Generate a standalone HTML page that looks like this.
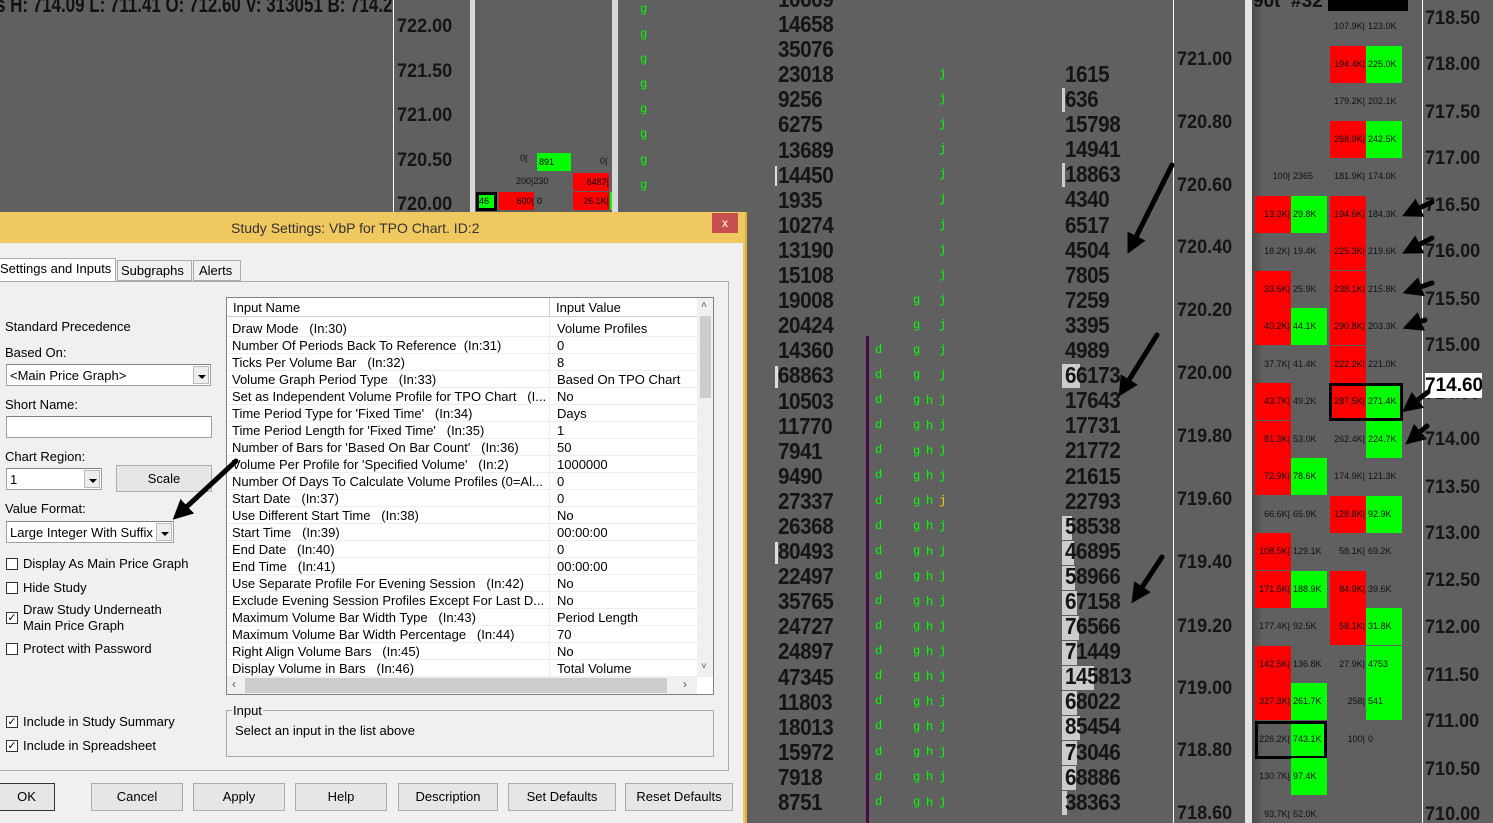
<!DOCTYPE html>
<html style="overflow:hidden;height:823px"><head><meta charset="utf-8"><style>
*{margin:0;padding:0;box-sizing:border-box}
html,body{overflow:hidden}
body{width:1493px;height:823px;overflow:hidden;background:#606060;position:relative;font-family:"Liberation Sans",sans-serif}
.a{position:absolute}
.big{position:absolute;font-size:23px;font-weight:bold;color:#151515;letter-spacing:-0.5px;line-height:25.1px;white-space:pre;transform:scaleX(0.9);transform-origin:0 0}
.px{position:absolute;font-size:19px;font-weight:bold;color:#151515;white-space:pre;transform:scaleX(0.95);transform-origin:0 0}
.lt{position:absolute;font-size:12px;color:#0f0;line-height:25.1px;white-space:pre;font-family:"Liberation Mono",monospace}
.c{position:absolute;width:36px;height:37px;line-height:37px;font-size:9px;color:#111;white-space:nowrap}
.L{text-align:right;padding-right:1px}.R{text-align:left;padding-left:2px}
.r{background:#f00}.g{background:#0f0}
.dlg{position:absolute;left:0;top:212px;width:747px;height:611px;background:#f0c860;border-right:2px solid #e0b040}
.dl{font-size:13px;color:#000;position:absolute;white-space:nowrap}
.box{position:absolute;background:#fff;border:1px solid #a0a0a0;border-top-color:#828282}
.dd{position:absolute;right:1px;top:1px;bottom:1px;width:16px;background:#eee;border:1px solid #bbb}
.dd:after{content:"";position:absolute;left:4px;top:8px;border:4px solid transparent;border-top:4px solid #000}
.cb{position:absolute;width:12px;height:12px;border:1px solid #333;background:#fff;font-size:11px;line-height:10px;text-align:center}
.btn{position:absolute;top:783px;height:28px;background:#e6e6e6;border:1px solid #adadad;font-size:13px;text-align:center;line-height:26px}
.tr{position:absolute;left:0;width:470px;height:17px;border-bottom:1px solid #eee;font-size:13px;line-height:17px;white-space:nowrap}
.tr span{position:absolute;left:5px}.tr b{font-weight:normal;position:absolute;left:330px}
</style></head><body>

<div class="a" style="left:0;top:0;width:393px;height:40px;overflow:hidden">
<div class="a" style="left:-4px;top:-8px;font-size:22px;font-weight:bold;color:#111;white-space:nowrap;transform:scaleX(0.77);transform-origin:0 0">s H: 714.09 L: 711.41 O: 712.60 V: 313051 B: 714.2</div>
</div>
<div class="a" style="left:393px;top:0;width:1px;height:212px;background:#fff"></div>
<div class="px" style="left:397px;top:16px">722.00</div>
<div class="px" style="left:397px;top:61px">721.50</div>
<div class="px" style="left:397px;top:105px">721.00</div>
<div class="px" style="left:397px;top:150px">720.50</div>
<div class="px" style="left:397px;top:194px">720.00</div>
<div class="a" style="left:470px;top:0;width:5px;height:212px;background:#d8d8d8"></div>
<div class="a" style="left:612px;top:0;width:6px;height:212px;background:#d8d8d8"></div>
<div class="a" style="left:520px;top:153px;font-size:9px;color:#111;">0|</div>
<div class="a g" style="left:537px;top:153px;width:34px;height:18px;font-size:9px;line-height:18px;padding-left:2px">891</div>
<div class="a" style="left:600px;top:156px;font-size:9px;color:#111">0|</div>
<div class="a" style="left:516px;top:176px;font-size:9px;color:#111">200|230</div>
<div class="a r" style="left:573px;top:173px;width:36px;height:18px;font-size:9px;line-height:18px;text-align:right">6487|</div>
<div class="a g" style="left:476px;top:192px;width:21px;height:19px;font-size:9px;line-height:13px;border:3px solid #000">46</div>
<div class="a r" style="left:499px;top:192px;width:35px;height:18px;font-size:9px;line-height:18px;text-align:right">600|</div>
<div class="a" style="left:537px;top:196px;font-size:9px">0</div>
<div class="a r" style="left:573px;top:192px;width:36px;height:18px;font-size:9px;line-height:18px;text-align:right">26.1K|</div>
<div class="a g" style="left:610px;top:192px;width:2px;height:18px"></div>
<div class="lt" style="left:640px;top:-3px">g
g
g
g
g
g
g
g</div>

<div class="big" style="left:778px;top:-13px">10669
14658
35076
23018
9256
6275
13689
14450
1935
10274
13190
15108
19008
20424
14360
68863
10503
11770
7941
9490
27337
26368
80493
22497
35765
24727
24897
47345
11803
18013
15972
7918
8751</div>
<div class="a" style="left:775px;top:166px;width:2px;height:20px;background:#ddd"></div>
<div class="a" style="left:775px;top:366px;width:3px;height:22px;background:#ddd"></div>
<div class="a" style="left:775px;top:542px;width:3px;height:22px;background:#ddd"></div>
<div class="a" style="left:866px;top:336px;width:3px;height:487px;background:#4a0a4a"></div>
<div class="lt" style="left:875px;top:338px">d
d
d
d
d
d
d
d
d
d
d
d
d
d
d
d
d
d
d</div>
<div class="lt" style="left:913px;top:288px">g
g
g
g
g
g
g
g
g
g
g
g
g
g
g
g
g
g
g
g
g</div>
<div class="lt" style="left:926px;top:389px">h
h
h
h
h
h
h
h
h
h
h
h
h
h
h
h
h</div>
<div class="lt" style="left:939px;top:62px">j
j
j
j
j
j
j
j
j
j
j
j
j
j
j
j
j
<span style="color:#fc0">j</span>
j
j
j
j
j
j
j
j
j
j
j
j</div>
<div class="a" style="left:1062px;top:88px;width:3px;height:24px;background:#ccc"></div>
<div class="a" style="left:1062px;top:163px;width:3px;height:24px;background:#ccc"></div>
<div class="a" style="left:1062px;top:364px;width:18px;height:24px;background:#ccc"></div>
<div class="a" style="left:1062px;top:516px;width:10px;height:24px;background:#ccc"></div>
<div class="a" style="left:1062px;top:541px;width:12px;height:24px;background:#ccc"></div>
<div class="a" style="left:1062px;top:566px;width:13px;height:24px;background:#ccc"></div>
<div class="a" style="left:1062px;top:591px;width:15px;height:24px;background:#ccc"></div>
<div class="a" style="left:1062px;top:616px;width:17px;height:24px;background:#ccc"></div>
<div class="a" style="left:1062px;top:641px;width:15px;height:24px;background:#ccc"></div>
<div class="a" style="left:1062px;top:666px;width:32px;height:24px;background:#ccc"></div>
<div class="a" style="left:1062px;top:691px;width:15px;height:24px;background:#ccc"></div>
<div class="a" style="left:1062px;top:716px;width:18px;height:24px;background:#ccc"></div>
<div class="a" style="left:1062px;top:741px;width:15px;height:24px;background:#ccc"></div>
<div class="a" style="left:1062px;top:766px;width:14px;height:24px;background:#ccc"></div>
<div class="a" style="left:1062px;top:791px;width:5px;height:24px;background:#ccc"></div>
<div class="big" style="left:1065px;top:62px">1615
636
15798
14941
18863
4340
6517
4504
7805
7259
3395
4989
66173
17643
17731
21772
21615
22793
58538
46895
58966
67158
76566
71449
145813
68022
85454
73046
68886
38363</div>
<div class="a" style="left:1173px;top:0;width:1px;height:823px;background:#fff"></div>
<div class="px" style="left:1177px;top:49px">721.00</div>
<div class="px" style="left:1177px;top:112px">720.80</div>
<div class="px" style="left:1177px;top:175px">720.60</div>
<div class="px" style="left:1177px;top:237px">720.40</div>
<div class="px" style="left:1177px;top:300px">720.20</div>
<div class="px" style="left:1177px;top:363px">720.00</div>
<div class="px" style="left:1177px;top:426px">719.80</div>
<div class="px" style="left:1177px;top:489px">719.60</div>
<div class="px" style="left:1177px;top:552px">719.40</div>
<div class="px" style="left:1177px;top:616px">719.20</div>
<div class="px" style="left:1177px;top:678px">719.00</div>
<div class="px" style="left:1177px;top:740px">718.80</div>
<div class="px" style="left:1177px;top:803px">718.60</div>

<div class="a" style="left:1245px;top:0;width:7px;height:823px;background:#e4e4e4"></div>
<div class="a" style="left:1252px;top:0;width:10px;height:823px;background:linear-gradient(90deg,#4a4a4a,#5e5e5e)"></div>
<div class="a" style="left:1253px;top:-9px;font-size:19px;font-weight:bold;color:#111;white-space:nowrap">90t &nbsp;#32</div>
<div class="a" style="left:1328px;top:-2px;width:80px;height:13px;background:#000"></div>
<div class="a" style="left:1422px;top:0;width:1px;height:823px;background:#fff"></div>

<div class="c L" style="left:1330px;top:8px">107.9K|</div><div class="c R" style="left:1366px;top:8px">123.0K</div>
<div class="c L r" style="left:1330px;top:46px">194.4K|</div><div class="c R g" style="left:1366px;top:46px">225.0K</div>
<div class="c L" style="left:1330px;top:83px">179.2K|</div><div class="c R" style="left:1366px;top:83px">202.1K</div>
<div class="c L r" style="left:1330px;top:121px">268.9K|</div><div class="c R g" style="left:1366px;top:121px">242.5K</div>
<div class="c L" style="left:1255px;top:158px">100|</div><div class="c R" style="left:1291px;top:158px">2365</div>
<div class="c L" style="left:1330px;top:158px">181.9K|</div><div class="c R" style="left:1366px;top:158px">174.0K</div>
<div class="c L r" style="left:1255px;top:196px">13.3K|</div><div class="c R g" style="left:1291px;top:196px">29.8K</div>
<div class="c L r" style="left:1330px;top:196px">194.6K|</div><div class="c R" style="left:1366px;top:196px">184.3K</div>
<div class="c L" style="left:1255px;top:233px">18.2K|</div><div class="c R" style="left:1291px;top:233px">19.4K</div>
<div class="c L r" style="left:1330px;top:233px">225.3K|</div><div class="c R" style="left:1366px;top:233px">219.6K</div>
<div class="c L r" style="left:1255px;top:271px">33.6K|</div><div class="c R" style="left:1291px;top:271px">25.9K</div>
<div class="c L r" style="left:1330px;top:271px">238.1K|</div><div class="c R" style="left:1366px;top:271px">215.8K</div>
<div class="c L r" style="left:1255px;top:308px">40.2K|</div><div class="c R g" style="left:1291px;top:308px">44.1K</div>
<div class="c L r" style="left:1330px;top:308px">290.8K|</div><div class="c R" style="left:1366px;top:308px">203.3K</div>
<div class="c L" style="left:1255px;top:346px">37.7K|</div><div class="c R" style="left:1291px;top:346px">41.4K</div>
<div class="c L r" style="left:1330px;top:346px">222.2K|</div><div class="c R" style="left:1366px;top:346px">221.0K</div>
<div class="c L r" style="left:1255px;top:383px">43.7K|</div><div class="c R" style="left:1291px;top:383px">49.2K</div>
<div class="c L r" style="left:1330px;top:383px">287.5K|</div><div class="c R g" style="left:1366px;top:383px">271.4K</div>
<div class="a" style="left:1329px;top:383px;width:74px;height:38px;border:3px solid #000"></div>
<div class="c L r" style="left:1255px;top:421px">81.3K|</div><div class="c R" style="left:1291px;top:421px">53.0K</div>
<div class="c L" style="left:1330px;top:421px">262.4K|</div><div class="c R g" style="left:1366px;top:421px">224.7K</div>
<div class="c L r" style="left:1255px;top:458px">72.9K|</div><div class="c R g" style="left:1291px;top:458px">78.6K</div>
<div class="c L" style="left:1330px;top:458px">174.9K|</div><div class="c R" style="left:1366px;top:458px">121.3K</div>
<div class="c L" style="left:1255px;top:496px">66.6K|</div><div class="c R" style="left:1291px;top:496px">65.9K</div>
<div class="c L r" style="left:1330px;top:496px">128.8K|</div><div class="c R g" style="left:1366px;top:496px">92.9K</div>
<div class="c L r" style="left:1255px;top:533px">108.5K|</div><div class="c R" style="left:1291px;top:533px">129.1K</div>
<div class="c L" style="left:1330px;top:533px">58.1K|</div><div class="c R" style="left:1366px;top:533px">69.2K</div>
<div class="c L r" style="left:1255px;top:571px">171.5K|</div><div class="c R g" style="left:1291px;top:571px">188.9K</div>
<div class="c L r" style="left:1330px;top:571px">84.9K|</div><div class="c R" style="left:1366px;top:571px">39.6K</div>
<div class="c L" style="left:1255px;top:608px">177.4K|</div><div class="c R" style="left:1291px;top:608px">92.5K</div>
<div class="c L r" style="left:1330px;top:608px">58.1K|</div><div class="c R g" style="left:1366px;top:608px">31.8K</div>
<div class="c L r" style="left:1255px;top:646px">142.5K|</div><div class="c R" style="left:1291px;top:646px">136.8K</div>
<div class="c L" style="left:1330px;top:646px">27.9K|</div><div class="c R g" style="left:1366px;top:646px">4753</div>
<div class="c L r" style="left:1255px;top:683px">327.3K|</div><div class="c R g" style="left:1291px;top:683px">261.7K</div>
<div class="c L" style="left:1330px;top:683px">258|</div><div class="c R g" style="left:1366px;top:683px">541</div>
<div class="c L" style="left:1255px;top:721px">226.2K|</div><div class="c R g" style="left:1291px;top:721px">743.1K</div>
<div class="a" style="left:1255px;top:721px;width:72px;height:38px;border:3px solid #000"></div>
<div class="c L" style="left:1330px;top:721px">100|</div><div class="c R" style="left:1366px;top:721px">0</div>
<div class="c L" style="left:1255px;top:758px">130.7K|</div><div class="c R g" style="left:1291px;top:758px">97.4K</div>
<div class="c L" style="left:1255px;top:796px;height:27px;line-height:37px">93.7K|</div><div class="c R" style="left:1291px;top:796px;height:27px;line-height:37px">52.0K</div>

<div class="px" style="left:1425px;top:8px">718.50</div>
<div class="px" style="left:1425px;top:54px">718.00</div>
<div class="px" style="left:1425px;top:102px">717.50</div>
<div class="px" style="left:1425px;top:148px">717.00</div>
<div class="px" style="left:1425px;top:195px">716.50</div>
<div class="px" style="left:1425px;top:241px">716.00</div>
<div class="px" style="left:1425px;top:289px">715.50</div>
<div class="px" style="left:1425px;top:335px">715.00</div>
<div class="px" style="left:1425px;top:383px">714.50</div>
<div class="px" style="left:1425px;top:429px">714.00</div>
<div class="px" style="left:1425px;top:477px">713.50</div>
<div class="px" style="left:1425px;top:523px">713.00</div>
<div class="px" style="left:1425px;top:570px">712.50</div>
<div class="px" style="left:1425px;top:617px">712.00</div>
<div class="px" style="left:1425px;top:665px">711.50</div>
<div class="px" style="left:1425px;top:711px">711.00</div>
<div class="px" style="left:1425px;top:759px">710.50</div>
<div class="a" style="left:1425px;top:804px;height:19px;overflow:hidden"><div class="px" style="position:relative">710.00</div></div>
<div class="a" style="left:1425px;top:373px;width:57px;height:25px;background:#fff;font-size:19px;font-weight:bold;line-height:25px;color:#000;overflow:hidden;white-space:nowrap">714.60</div>

<div class="dlg">
  <div class="dl" style="left:231px;top:8px;font-size:14px;color:#333">Study Settings: VbP for TPO Chart. ID:2</div>
  <div class="a" style="left:712px;top:1px;width:26px;height:20px;background:#c75050;color:#fff;font-size:12px;text-align:center;line-height:20px">x</div>
  <div class="a" style="left:0;top:31px;width:743px;height:580px;background:#f0f0f0"></div>
</div>
<div class="a" style="left:0;top:258px;width:116px;height:24px;background:#fff;border:1px solid #aaa;border-bottom:none;border-left:none"></div>
<div class="dl" style="left:0;top:261px">Settings and Inputs</div>
<div class="a" style="left:117px;top:260px;width:75px;height:21px;border:1px solid #aaa;background:#f0f0f0"></div>
<div class="dl" style="left:121px;top:263px">Subgraphs</div>
<div class="a" style="left:193px;top:260px;width:48px;height:21px;border:1px solid #aaa;background:#f0f0f0"></div>
<div class="dl" style="left:199px;top:263px">Alerts</div>
<div class="a" style="left:-2px;top:281px;width:731px;height:490px;border:1px solid #aaa"></div>

<div class="dl" style="left:5px;top:319px">Standard Precedence</div>
<div class="dl" style="left:5px;top:345px">Based On:</div>
<div class="box" style="left:6px;top:364px;width:205px;height:22px"><div class="dl" style="left:3px;top:3px">&lt;Main Price Graph&gt;</div><div class="dd"></div></div>
<div class="dl" style="left:5px;top:397px">Short Name:</div>
<div class="box" style="left:6px;top:416px;width:206px;height:22px"></div>
<div class="dl" style="left:5px;top:449px">Chart Region:</div>
<div class="box" style="left:6px;top:468px;width:96px;height:22px"><div class="dl" style="left:3px;top:3px">1</div><div class="dd"></div></div>
<div class="btn" style="left:116px;top:465px;width:96px;height:27px">Scale</div>
<div class="dl" style="left:5px;top:501px">Value Format:</div>
<div class="box" style="left:6px;top:521px;width:168px;height:22px"><div class="dl" style="left:3px;top:3px">Large Integer With Suffix</div><div class="dd"></div></div>
<div class="cb" style="left:6px;top:558px"></div><div class="dl" style="left:23px;top:556px">Display As Main Price Graph</div>
<div class="cb" style="left:6px;top:582px"></div><div class="dl" style="left:23px;top:580px">Hide Study</div>
<div class="cb" style="left:6px;top:612px">✓</div><div class="dl" style="left:23px;top:602px;line-height:16px">Draw Study Underneath<br>Main Price Graph</div>
<div class="cb" style="left:6px;top:643px"></div><div class="dl" style="left:23px;top:641px">Protect with Password</div>
<div class="cb" style="left:6px;top:716px">✓</div><div class="dl" style="left:23px;top:714px">Include in Study Summary</div>
<div class="cb" style="left:6px;top:740px">✓</div><div class="dl" style="left:23px;top:738px">Include in Spreadsheet</div>

<div class="a" style="left:226px;top:297px;width:488px;height:398px;background:#fff;border:1px solid #828282;overflow:hidden">
  <div class="a" style="left:0;top:0;width:470px;height:19px;border-bottom:1px solid #ccc;font-size:13px;line-height:19px"><span class="a" style="left:6px">Input Name</span><span class="a" style="left:322px;top:0;height:19px;border-left:1px solid #ccc;padding-left:6px">Input Value</span></div>
  <div class="tr" style="top:22px"><span>Draw Mode &nbsp; (In:30)</span><b>Volume Profiles</b></div>
  <div class="tr" style="top:39px"><span>Number Of Periods Back To Reference &nbsp;(In:31)</span><b>0</b></div>
  <div class="tr" style="top:56px"><span>Ticks Per Volume Bar &nbsp; (In:32)</span><b>8</b></div>
  <div class="tr" style="top:73px"><span>Volume Graph Period Type &nbsp; (In:33)</span><b>Based On TPO Chart</b></div>
  <div class="tr" style="top:90px"><span>Set as Independent Volume Profile for TPO Chart &nbsp; (I...</span><b>No</b></div>
  <div class="tr" style="top:107px"><span>Time Period Type for 'Fixed Time' &nbsp; (In:34)</span><b>Days</b></div>
  <div class="tr" style="top:124px"><span>Time Period Length for 'Fixed Time' &nbsp; (In:35)</span><b>1</b></div>
  <div class="tr" style="top:141px"><span>Number of Bars for 'Based On Bar Count' &nbsp; (In:36)</span><b>50</b></div>
  <div class="tr" style="top:158px"><span>Volume Per Profile for 'Specified Volume' &nbsp; (In:2)</span><b>1000000</b></div>
  <div class="tr" style="top:175px"><span>Number Of Days To Calculate Volume Profiles (0=Al...</span><b>0</b></div>
  <div class="tr" style="top:192px"><span>Start Date &nbsp; (In:37)</span><b>0</b></div>
  <div class="tr" style="top:209px"><span>Use Different Start Time &nbsp; (In:38)</span><b>No</b></div>
  <div class="tr" style="top:226px"><span>Start Time &nbsp; (In:39)</span><b>00:00:00</b></div>
  <div class="tr" style="top:243px"><span>End Date &nbsp; (In:40)</span><b>0</b></div>
  <div class="tr" style="top:260px"><span>End Time &nbsp; (In:41)</span><b>00:00:00</b></div>
  <div class="tr" style="top:277px"><span>Use Separate Profile For Evening Session &nbsp; (In:42)</span><b>No</b></div>
  <div class="tr" style="top:294px"><span>Exclude Evening Session Profiles Except For Last D...</span><b>No</b></div>
  <div class="tr" style="top:311px"><span>Maximum Volume Bar Width Type &nbsp; (In:43)</span><b>Period Length</b></div>
  <div class="tr" style="top:328px"><span>Maximum Volume Bar Width Percentage &nbsp; (In:44)</span><b>70</b></div>
  <div class="tr" style="top:345px"><span>Right Align Volume Bars &nbsp; (In:45)</span><b>No</b></div>
  <div class="tr" style="top:362px"><span>Display Volume in Bars &nbsp; (In:46)</span><b>Total Volume</b></div>
  <div class="a" style="left:322px;top:19px;width:1px;height:360px;background:#eee"></div>
  <div class="a" style="left:470px;top:0;width:17px;height:379px;background:#f0f0f0"></div>
  <div class="a" style="left:473px;top:18px;width:11px;height:82px;background:#cdcdcd"></div>
  <div class="a" style="left:474px;top:2px;font-size:10px;color:#555">˄</div>
  <div class="a" style="left:474px;top:363px;font-size:10px;color:#555">˅</div>
  <div class="a" style="left:0;top:379px;width:470px;height:18px;background:#f0f0f0"></div>
  <div class="a" style="left:18px;top:380px;width:422px;height:15px;background:#cdcdcd"></div>
  <div class="a" style="left:5px;top:379px;font-size:12px;color:#555">‹</div>
  <div class="a" style="left:456px;top:379px;font-size:12px;color:#555">›</div>
</div>
<div class="a" style="left:226px;top:710px;width:488px;height:47px;border:1px solid #aaa"></div>
<div class="dl" style="left:232px;top:703px;background:#f0f0f0;padding:0 1px">Input</div>
<div class="dl" style="left:235px;top:723px">Select an input in the list above</div>

<div class="btn" style="left:-2px;width:57px;border-color:#333">OK</div>
<div class="btn" style="left:91px;width:92px">Cancel</div>
<div class="btn" style="left:193px;width:92px">Apply</div>
<div class="btn" style="left:295px;width:92px">Help</div>
<div class="btn" style="left:398px;width:100px">Description</div>
<div class="btn" style="left:508px;width:108px">Set Defaults</div>
<div class="btn" style="left:625px;width:108px">Reset Defaults</div>

<svg class="a" style="left:0;top:0" width="1493" height="823">
<defs><marker id="m" markerWidth="4" markerHeight="4" refX="2" refY="2" orient="auto"><path d="M0,0 L4,2 L0,4 z" fill="#000"/></marker></defs>
<g stroke="#000" stroke-width="5" stroke-linecap="round" marker-end="url(#m)">
<line x1="236" y1="461" x2="180" y2="513"/>
<line x1="1172" y1="165" x2="1132" y2="245"/>
<line x1="1157" y1="335" x2="1124" y2="388"/>
<line x1="1162" y1="557" x2="1137" y2="595"/>
<line x1="1432" y1="202" x2="1411" y2="212"/>
<line x1="1432" y1="238" x2="1411" y2="249"/>
<line x1="1432" y1="283" x2="1412" y2="290"/>
<line x1="1425" y1="320" x2="1412" y2="325"/>
<line x1="1428" y1="392" x2="1410" y2="406"/>
<line x1="1427" y1="426" x2="1413" y2="438"/>
</g></svg>
</body></html>
